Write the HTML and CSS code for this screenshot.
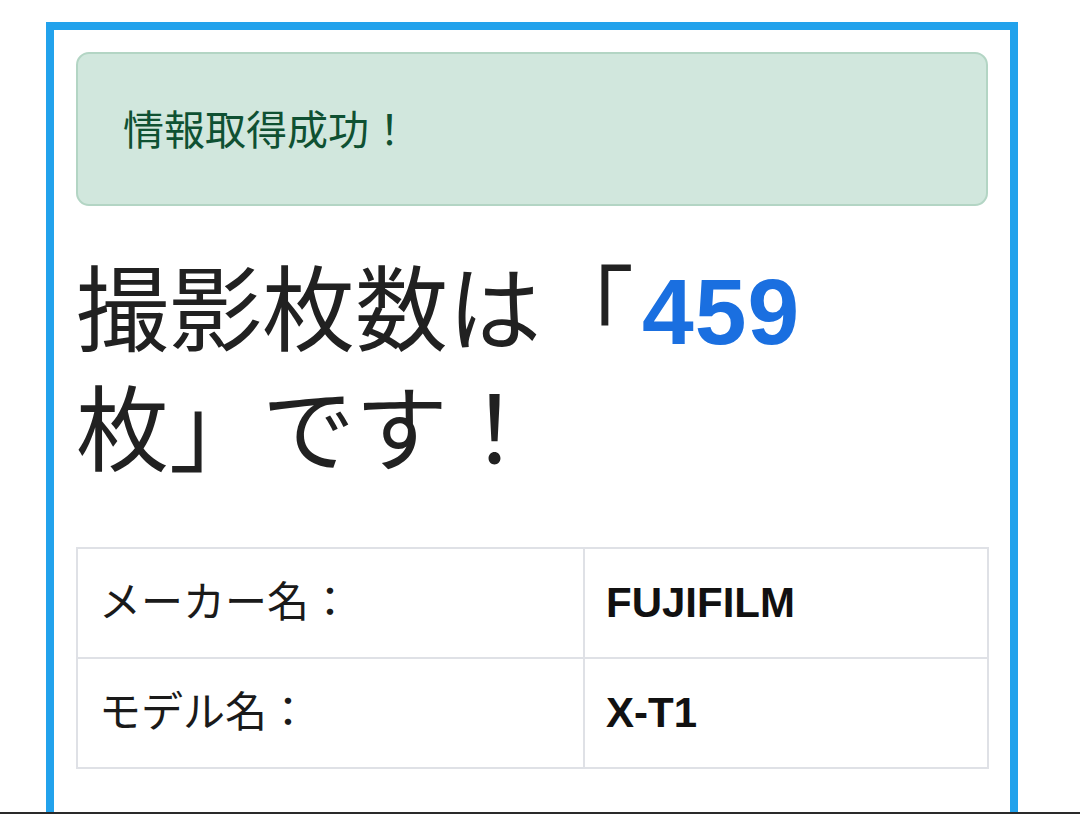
FILE: index.html
```html
<!DOCTYPE html>
<html lang="ja">
<head>
<meta charset="utf-8">
<title>撮影枚数</title>
<link rel="stylesheet" href="styles.css">
</head>
<body>
<div class="frame">
  <div class="alert">情報取得成功！</div>
  <h1 class="count">撮影枚数は「<span class="num">459</span><br>枚」です！</h1>
  <table class="info">
    <colgroup><col class="c1"><col class="c2"></colgroup>
    <tbody>
      <tr><td>メーカー名：</td><td class="val">FUJIFILM</td></tr>
      <tr><td>モデル名：</td><td class="val">X-T1</td></tr>
    </tbody>
  </table>
</div>
<div class="bottom-edge"></div>
</body>
</html>
```
FILE: styles.css
```css
html, body {
  margin: 0;
  padding: 0;
  overflow: hidden;
  background: #ffffff;
}
body {
  font-family: "Liberation Sans", "Noto Sans CJK JP", sans-serif;
  color: #212529;
}
.frame {
  box-sizing: border-box;
  margin: 22px 0 0 46px;
  width: 972px;
  height: 1000px;
  border: 8px solid #22a2ec;
  border-bottom: none;
  padding: 22px 22px 0 22px;
}
.alert {
  box-sizing: border-box;
  height: 154px;
  background: #d1e7dd;
  border: 2px solid #b3d5c4;
  border-radius: 13px;
  color: #0f5132;
  font-size: 41px;
  line-height: 154px;
  padding: 0 0 0 45px;
}
.count {
  margin: 46px 0 55px 0;
  font-size: 93px;
  font-weight: 400;
  line-height: 120px;
  color: #212121;
  letter-spacing: 0;
}
.count .num {
  color: #1a6fe0;
  font-weight: 700;
  margin-left: 8px;
  letter-spacing: 1px;
}
.info {
  width: 911px;
  border-collapse: collapse;
  table-layout: fixed;
  font-size: 42px;
}
.info .c1 { width: 507px; }
.info .c2 { width: 404px; }
.info td {
  border: 2px solid #dfe1e6;
  padding: 24px 22px 24px 21px;
  line-height: 60px;
  color: #1a1a1a;
}
.info td.val {
  font-weight: 700;
  color: #111111;
}
.bottom-edge {
  position: fixed;
  left: 0;
  right: 0;
  bottom: 0;
  height: 2px;
  background: #2a2a2a;
}
```
